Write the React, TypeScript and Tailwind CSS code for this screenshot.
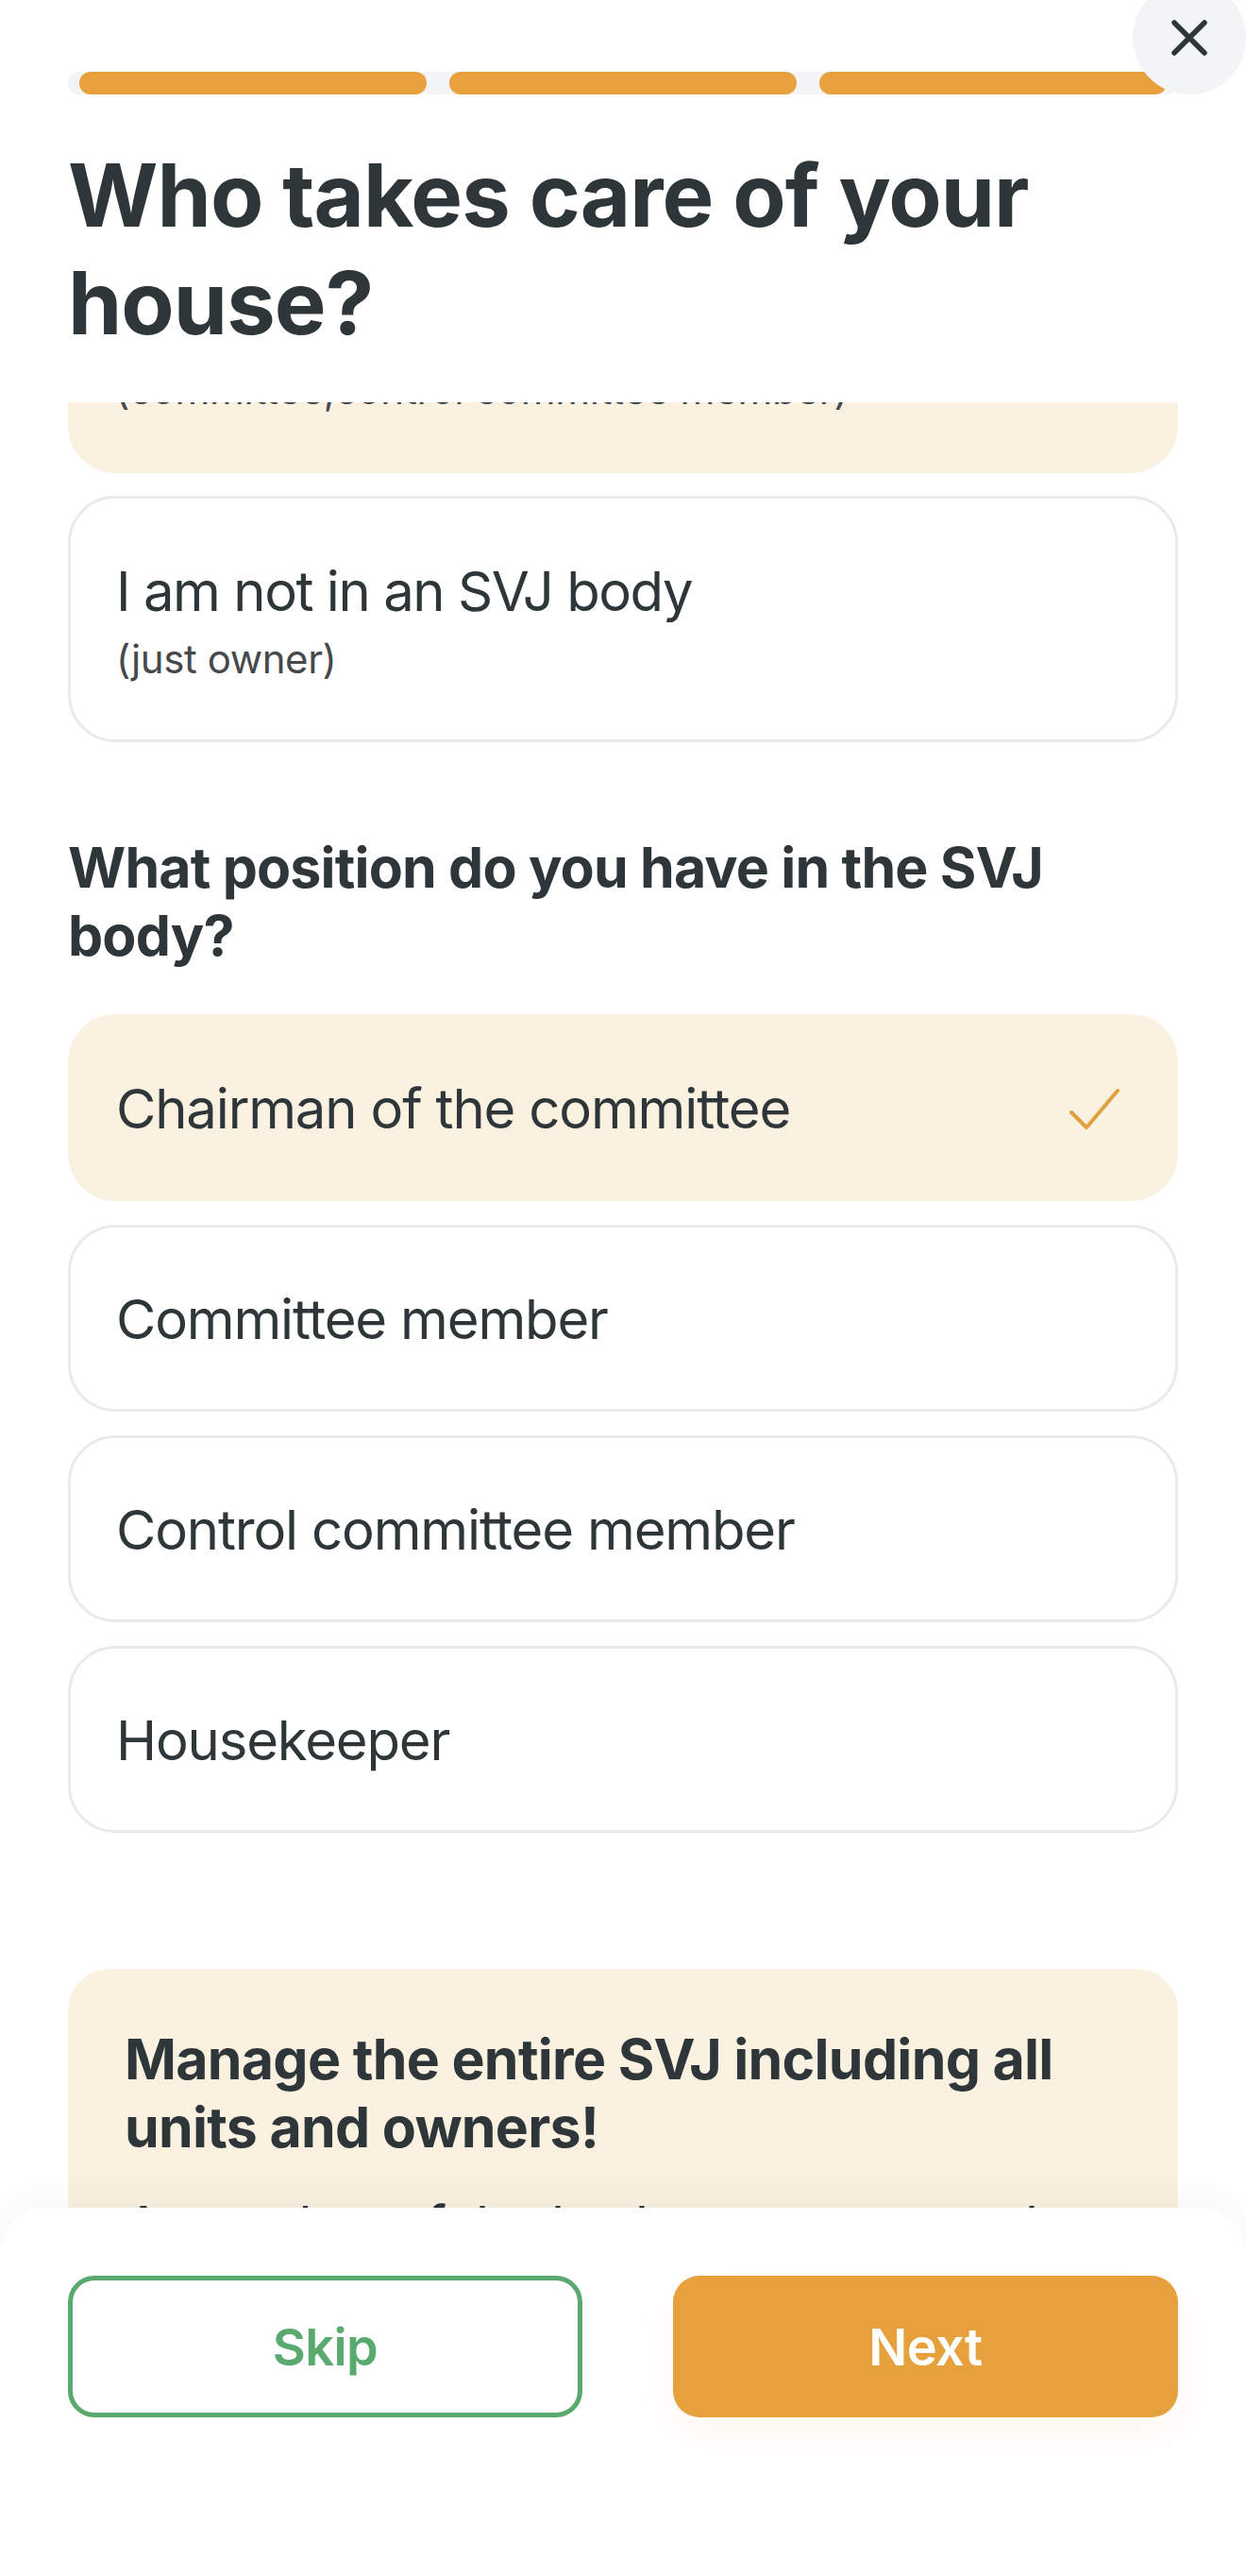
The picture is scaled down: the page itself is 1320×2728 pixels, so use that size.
const positions = ["Committee member", "Control committee member", "Housekeeper"];

function Segment() {
  return <div className="h-full flex-1 rounded-[12px] bg-[#e6a03c]" />;
}

function CheckMark() {
  return (
    <svg viewBox="0 0 53 43" className="h-[43px] w-[53px] fill-none stroke-[#e0a040] stroke-[4px]">
      <path d="M2 25 L18 41 L51 2" strokeLinecap="round" strokeLinejoin="round" />
    </svg>
  );
}

function CloseIcon() {
  return (
    <svg viewBox="0 0 38 38" className="h-[38px] w-[38px] fill-none stroke-[#2f3639] stroke-[5.5px]">
      <path d="M3 3 L35 35 M35 3 L3 35" strokeLinecap="round" />
    </svg>
  );
}

export default function App() {
  return (
    <div className="relative flex h-[2728px] w-[1320px] flex-col overflow-hidden bg-white font-['Inter',sans-serif] text-[#2f3639]">
      <div className="relative z-10 bg-white px-[72px] pt-[76px]">
        <div className="flex h-[24px] gap-[24px] overflow-hidden rounded-[12px] bg-[#f3f4f5] px-[12px]">
          <Segment />
          <Segment />
          <Segment />
        </div>
        <h1 className="mt-[50px] h-[276px] text-[92px] leading-[114px] font-bold tracking-[-0.01em]">
          Who takes care of your house?
        </h1>
      </div>

      <div className="flex-1 overflow-hidden px-[72px]">
        <div className="-mt-[125px] flex flex-col">
          <div className="flex h-[200px] flex-col justify-end rounded-b-[50px] bg-[#faf1e0] px-[50px] pb-[62px]">
            <p className="text-[42px] leading-[52px] tracking-[-0.005em] text-[#45494b]">
              (committee,control committee member)
            </p>
          </div>
          <div className="mt-[24px] flex h-[261px] flex-col justify-center rounded-[50px] border-[3px] border-[#e9eaeb] px-[48px]">
            <p className="text-[58px] leading-[72px] tracking-[-0.025em]">I am not in an SVJ body</p>
            <p className="mt-[12px] text-[42px] leading-[48px] tracking-[-0.01em] text-[#45494b]">(just owner)</p>
          </div>

          <h2 className="mt-[97px] text-[59px] leading-[72px] font-bold tracking-[-0.014em]">
            What position do you have in the SVJ body?
          </h2>

          <div className="mt-[47px] flex flex-col gap-[25px]">
            <div className="flex h-[198px] items-center justify-between rounded-[50px] bg-[#faf1e0] pt-[2px] pr-[62px] pl-[51px]">
              <span className="text-[58px] tracking-[-0.02em]">Chairman of the committee</span>
              <CheckMark />
            </div>
            {positions.map((label) => (
              <div
                key={label}
                className="flex h-[198px] items-center rounded-[50px] border-[3px] border-[#e9eaeb] px-[48px] pt-[2px]"
              >
                <span className="text-[58px] tracking-[-0.02em]">{label}</span>
              </div>
            ))}
          </div>

          <div className="mt-[144px] rounded-[44px] bg-[#faf1e0] px-[60px] py-[60px]">
            <h3 className="text-[59px] leading-[72px] font-bold tracking-[-0.012em]">
              Manage the entire SVJ including all units and owners!
            </h3>
            <p className="mt-[32px] text-[58px] leading-[72px] tracking-[-0.025em]">
              A member of the body can manage the entire house
            </p>
          </div>
        </div>
      </div>

      <div className="absolute inset-x-0 bottom-0 z-20 flex h-[390px] gap-[96px] rounded-t-[48px] bg-white px-[72px] pt-[72px] shadow-[0_-8px_40px_rgba(0,0,0,0.04)]">
        <button
          type="button"
          className="h-[150px] w-[545px] rounded-[28px] border-[5px] border-[#5aa96e] text-[54px] font-semibold tracking-[-0.01em] text-[#5aa96e]"
        >
          Skip
        </button>
        <button
          type="button"
          className="h-[150px] flex-1 rounded-[28px] bg-[#e6a03c] text-[54px] font-semibold tracking-[-0.01em] text-white shadow-[0_16px_40px_rgba(230,160,60,0.08)]"
        >
          Next
        </button>
      </div>

      <button
        type="button"
        className="absolute -top-[20px] right-0 z-30 flex h-[120px] w-[120px] items-center justify-center rounded-full bg-[#f3f4f5]"
      >
        <CloseIcon />
      </button>
    </div>
  );
}
